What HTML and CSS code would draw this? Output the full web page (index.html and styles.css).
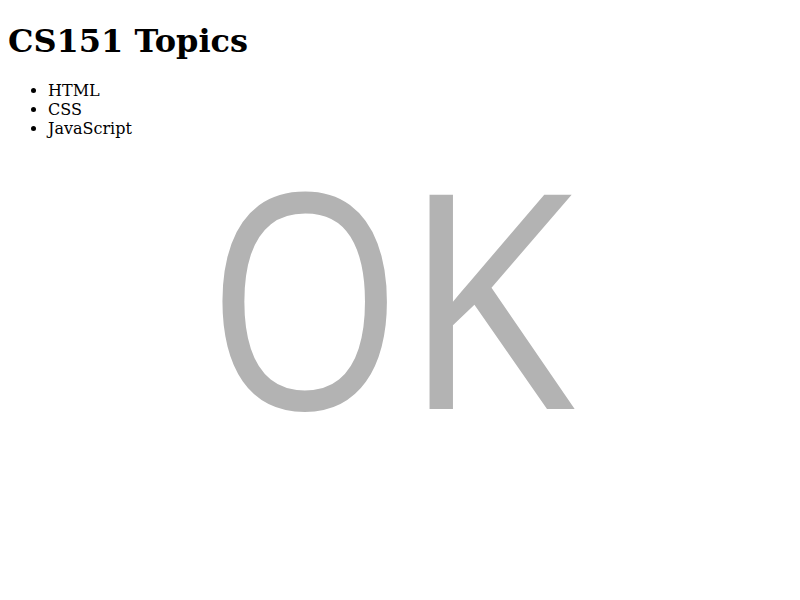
FILE: index.html
```html
<!DOCTYPE html>
<html>
<head>
<meta charset="utf-8">
<title>CS151 Topics</title>
<link rel="stylesheet" href="styles.css">
</head>
<body>
<h1 class="title">CS151 Topics</h1>
<ul class="topics">
  <li>HTML</li>
  <li>CSS</li>
  <li>JavaScript</li>
</ul>
<div class="ok"><span class="ok-o">O</span><span class="ok-k">K</span></div>
</body>
</html>
```
FILE: styles.css
```css
body {
  font-family: "DejaVu Serif", serif;
}
.title {
  margin-top: 14px;
}
.ok {
  font-family: "Open Sans", sans-serif;
  font-stretch: 100%;
  font-size: 300px;
  line-height: 277px;
  color: #b3b3b3;
  text-align: center;
  filter: blur(0.7px);
}
.ok-o,
.ok-k {
  display: inline-block;
}
.ok-o {
  transform-origin: center center;
  transform: translateX(-3px) scaleX(0.836);
}
.ok-k {
  transform-origin: left center;
  transform: translateX(-23px) scaleX(0.94);
}
```
